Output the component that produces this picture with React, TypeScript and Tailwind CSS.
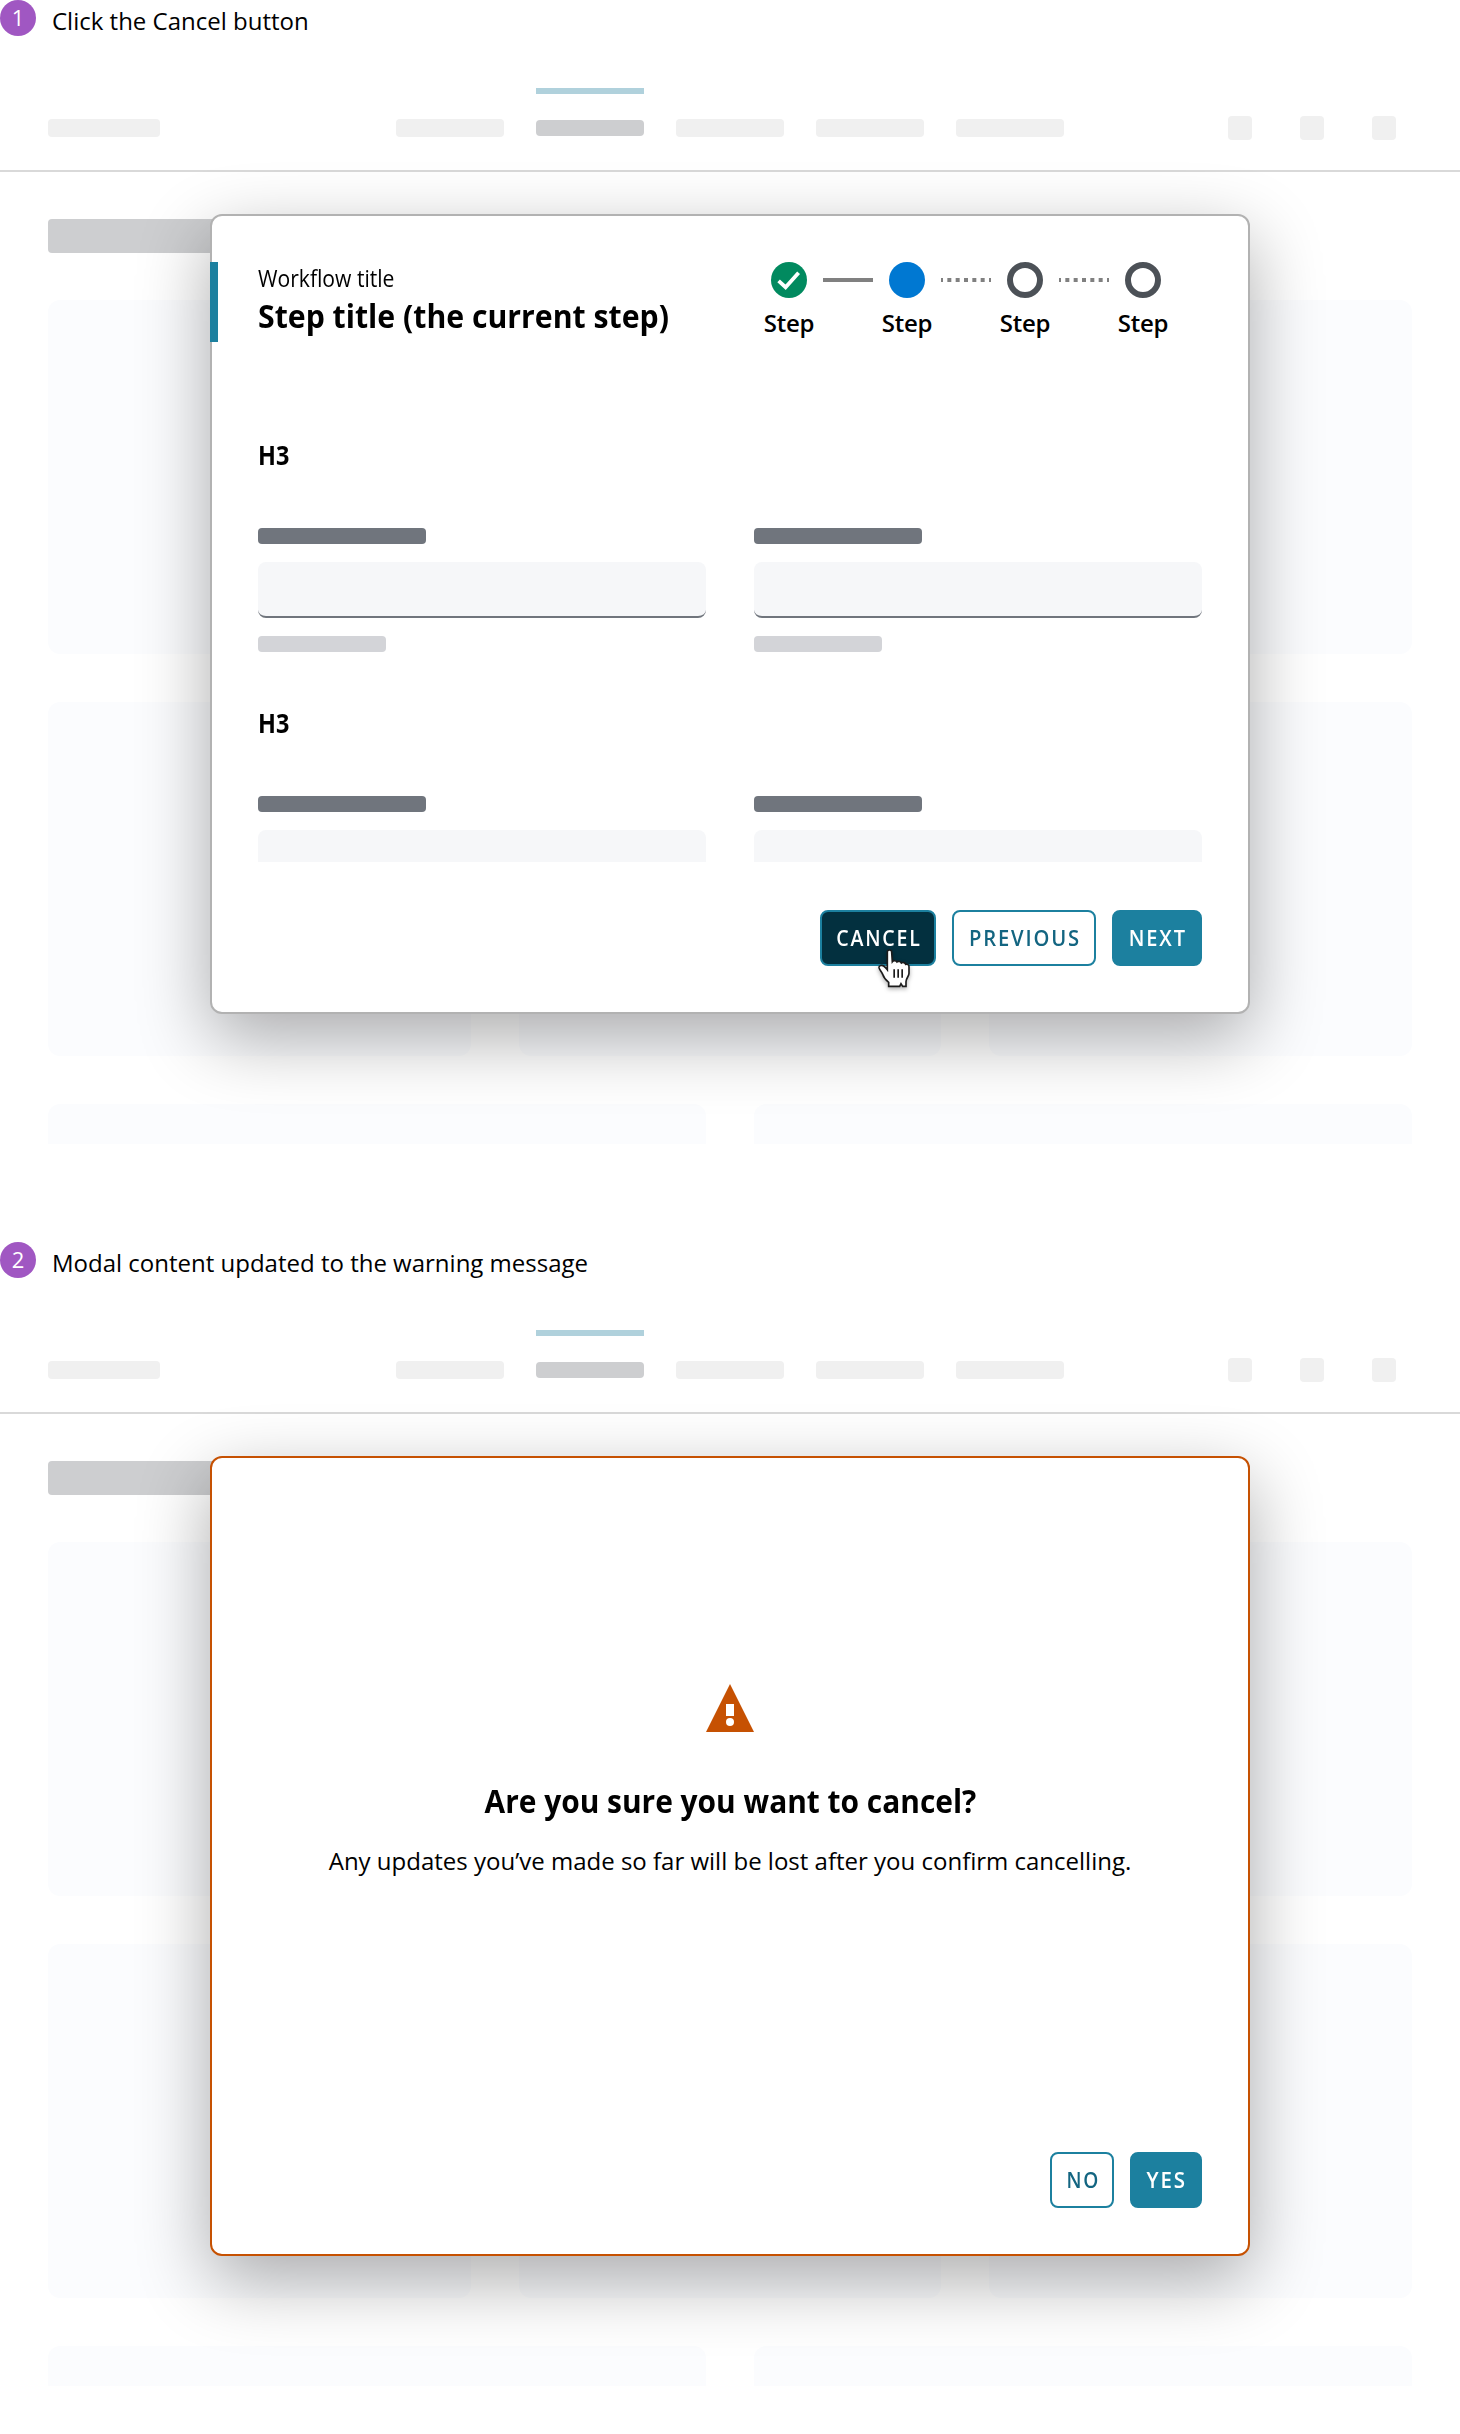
import type { ReactNode } from "react";

const FONT = "font-['Open_Sans',sans-serif]";

function Caption({ n, children }: { n: number; children: ReactNode }) {
  return (
    <div className="flex h-9 gap-4">
      <span className="flex size-9 items-center justify-center rounded-full bg-[#a057c2] pb-px text-[22px] text-white">
        {n}
      </span>
      <p className="mt-[3px] whitespace-nowrap text-2xl leading-9 text-black">{children}</p>
    </div>
  );
}

function NavPlaceholder() {
  return (
    <div className="mt-[52px] flex h-[84px] border-b-2 border-[#d9d9d9] pt-7">
      <div className="ml-12 flex h-6 items-center">
        <div className="h-[18px] w-28 rounded bg-[#f0f0f0]" />
      </div>
      <div className="ml-[236px] flex h-6 items-center gap-8">
        <div className="h-[18px] w-[108px] rounded bg-[#f0f0f0]" />
        <div className="relative h-4 w-[108px] rounded bg-[#cdced0]">
          <div className="absolute -top-8 left-0 h-1.5 w-full bg-[#b0d1dc]" />
        </div>
        <div className="h-[18px] w-[108px] rounded bg-[#f0f0f0]" />
        <div className="h-[18px] w-[108px] rounded bg-[#f0f0f0]" />
        <div className="h-[18px] w-[108px] rounded bg-[#f0f0f0]" />
      </div>
      <div className="ml-[164px] flex gap-12">
        <div className="size-6 rounded bg-[#f0f0f0]" />
        <div className="size-6 rounded bg-[#f0f0f0]" />
        <div className="size-6 rounded bg-[#f0f0f0]" />
      </div>
    </div>
  );
}

function PagePlaceholder() {
  return (
    <div className="px-12 pt-[47px]">
      <div className="h-[34px] w-[300px] rounded bg-[#cdced0]" />
      <div className="mt-[47px] grid grid-cols-3 gap-12">
        {[0, 1, 2, 3, 4, 5].map((i) => (
          <div key={i} className="h-[354px] rounded-xl bg-[#fbfcfe]" />
        ))}
      </div>
      <div className="mt-12 grid grid-cols-2 gap-12">
        <div className="h-10 rounded-t-xl bg-[#fbfcfe]" />
        <div className="h-10 rounded-t-xl bg-[#fbfcfe]" />
      </div>
    </div>
  );
}

function Scene({ n, caption, children }: { n: number; caption: string; children: ReactNode }) {
  return (
    <section className="relative h-[1242px] last:h-[1192px]">
      <Caption n={n}>{caption}</Caption>
      <NavPlaceholder />
      <PagePlaceholder />
      {children}
    </section>
  );
}

const buttonBase =
  "relative flex h-14 items-center justify-center rounded-lg border-2 border-[#1c809f] pb-[2px] pl-[2px] text-[22px] font-semibold tracking-[2px] ";

function StepItem({ state }: { state: "done" | "current" | "todo" }) {
  return (
    <div className="flex w-9 flex-col items-center">
      <svg width="36" height="36" viewBox="0 0 36 36" className="block">
        {state === "done" && (
          <>
            <circle cx="18" cy="18" r="18" fill="#018a5f" />
            <path d="M7.6 18.8 L14.6 25.2 L27.6 10.8" fill="none" stroke="#fff" strokeWidth="3.8" />
          </>
        )}
        {state === "current" && <circle cx="18" cy="18" r="18" fill="#0078d2" />}
        {state === "todo" && <circle cx="18" cy="18" r="15" fill="none" stroke="#4c5157" strokeWidth="6" />}
      </svg>
      <span className="mt-[11px] text-2xl leading-7 font-semibold [letter-spacing:-0.2px]">Step</span>
    </div>
  );
}

function Connector({ dotted }: { dotted?: boolean }) {
  return (
    <svg width="50" height="4" viewBox="0 0 50 4" className="mt-4 block">
      {dotted ? (
        <path d="M0 2H50" stroke="#808080" strokeWidth="4" strokeDasharray="4 4.333" strokeDashoffset="2" />
      ) : (
        <path d="M0 2H50" stroke="#808080" strokeWidth="4" />
      )}
    </svg>
  );
}

function Field() {
  return (
    <div>
      <div className="h-4 w-[168px] rounded bg-[#70757d]" />
      <div className="mt-[18px] h-14 rounded-lg border-b-2 border-[#70757d] bg-[#f6f7f9]" />
      <div className="mt-[18px] h-4 w-32 rounded bg-[#d3d4d8]" />
    </div>
  );
}

function FieldGroup() {
  return (
    <div className="h-[268px] pt-px">
      <h3 className="origin-left scale-x-[0.9] text-[26px] leading-9 font-bold">H3</h3>
      <div className="mt-[55px] grid grid-cols-2 gap-12">
        <Field />
        <Field />
      </div>
    </div>
  );
}

function HandCursor() {
  return (
    <svg
      viewBox="0 0 210 210"
      width="70"
      height="70"
      className="pointer-events-none absolute top-[17px] left-[38px] z-10 drop-shadow-[0_2px_2px_rgba(0,0,0,0.3)]"
    >
      <path
        d="M82 69C82 61 95 61 95 69L97 98C100 94 108 94 111 99C114 96 122 97 124 102C128 99 136 101 137 106C142 105 147 107 147 113L147 133C147 142 138 148 138 158L138 172L128 172L123 164L119 172L86 172L86 160C77 153 71 146 68 136C65 128 58 122 57 116C56 109 66 107 71 111C76 115 79 118 82 122Z"
        fill="#fff"
        stroke="#1c1c1c"
        strokeWidth="5"
      />
      <path d="M102.500 121V146M114.500 121V146M126.500 121V146" stroke="#1c1c1c" strokeWidth="5" />
    </svg>
  );
}

const modalShadow = "shadow-[0_24px_72px_rgba(0,0,0,0.33)]";

export default function App() {
  return (
    <main className={"w-[1460px] overflow-hidden bg-white text-black " + FONT}>
      <Scene n={1} caption="Click the Cancel button">
        <div
          className={
            "absolute top-[214px] left-[210px] flex h-[800px] w-[1040px] flex-col rounded-xl border-2 border-[#b2b2b2] bg-white px-[46px] pt-[46px] " +
            modalShadow
          }
        >
          <div className="absolute top-[46px] -left-0.5 h-20 w-2 bg-[#1c809f]" />
          <header className="flex h-[174px] justify-between">
            <div className="w-[450px]">
              <p className="mt-0.5 origin-left scale-x-[0.918] text-[23px] leading-7">Workflow title</p>
              <h2 className="mt-1 origin-left scale-x-[0.916] text-[33px] leading-10 font-bold whitespace-nowrap">
                Step title (the current step)
              </h2>
            </div>
            <div className="mr-[41px] flex items-start gap-4">
              <StepItem state="done" />
              <Connector />
              <StepItem state="current" />
              <Connector dotted />
              <StepItem state="todo" />
              <Connector dotted />
              <StepItem state="todo" />
            </div>
          </header>
          <div className="h-[426px] shrink-0 overflow-hidden">
            <FieldGroup />
            <FieldGroup />
          </div>
          <footer className="mt-12 flex justify-end gap-4">
            <button className={buttonBase + "w-[116px] bg-[#03303f] text-white"}>
              <span className="scale-x-[0.89]">CANCEL</span>
              <HandCursor />
            </button>
            <button className={buttonBase + "w-36 bg-white text-[#136581]"}>
              <span className="scale-x-[0.918]">PREVIOUS</span>
            </button>
            <button className={buttonBase + "w-[90px] bg-[#1c809f] text-white"}>
              <span className="scale-x-[0.91]">NEXT</span>
            </button>
          </footer>
        </div>
      </Scene>
      <Scene n={2} caption="Modal content updated to the warning message">
        <div
          className={
            "absolute top-[214px] left-[210px] flex h-[800px] w-[1040px] flex-col items-center rounded-xl border-2 border-[#c65102] bg-white px-[46px] pt-[226px] pb-[46px] " +
            modalShadow
          }
        >
          <svg width="48" height="48" viewBox="0 0 48 48" className="block shrink-0">
            <path d="M24 0L48 48H0Z" fill="#c65102" />
            <path d="M20 20H28V32H20Z" fill="#fff" />
            <circle cx="24" cy="38" r="4" fill="#fff" />
          </svg>
          <h2 className="mt-[49px] scale-x-[0.906] text-[33px] leading-10 font-bold whitespace-nowrap">
            Are you sure you want to cancel?
          </h2>
          <p className="mt-[22px] text-2xl leading-9 whitespace-nowrap">
            Any updates you’ve made so far will be lost after you confirm cancelling.
          </p>
          <footer className="mt-auto flex gap-4 self-end">
            <button className={buttonBase + "w-16 bg-white text-[#136581]"}>
              <span className="scale-x-[0.87]">NO</span>
            </button>
            <button className={buttonBase + "w-[72px] bg-[#1c809f] text-white"}>
              <span className="scale-x-[0.93]">YES</span>
            </button>
          </footer>
        </div>
      </Scene>
    </main>
  );
}
